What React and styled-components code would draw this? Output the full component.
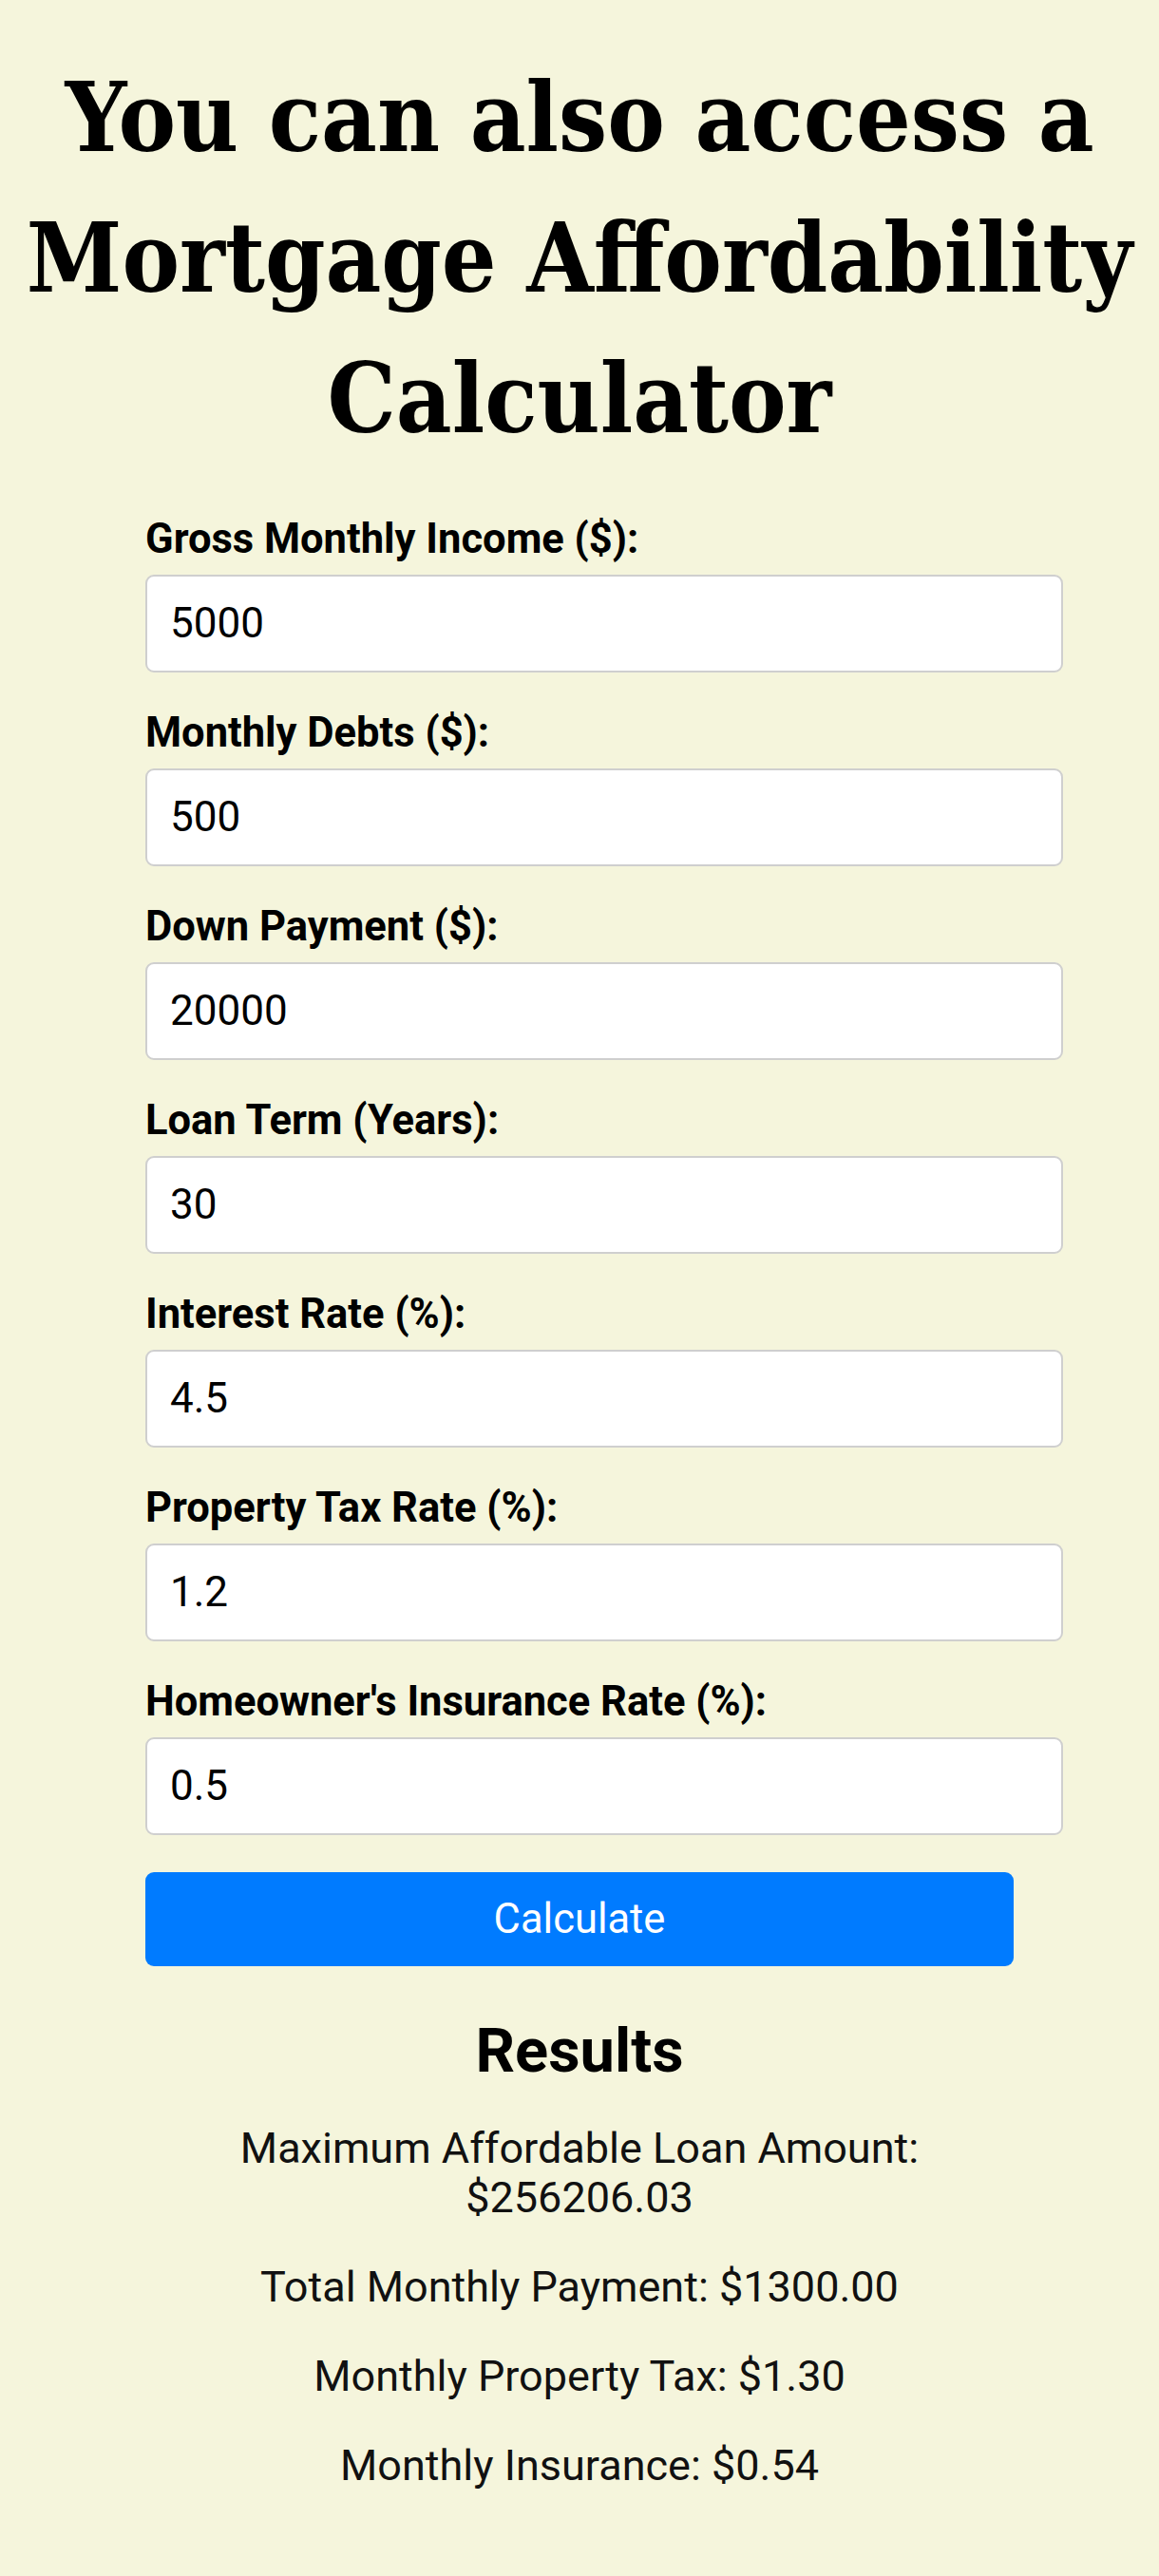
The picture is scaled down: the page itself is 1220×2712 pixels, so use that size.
import React from "react";
import styled, { createGlobalStyle } from "styled-components";

const GlobalStyle = createGlobalStyle`
  html, body {
    margin: 0;
    padding: 0;
    background: #f5f5dc;
  }
  body {
    font-family: Roboto, "Liberation Sans", Arial, sans-serif;
    color: #000;
  }
`;

const Page = styled.div`
  min-height: 2712px;
  padding: 50px 8px 0;
  box-sizing: border-box;
`;

const Title = styled.h1`
  margin: 0 0 49px;
  text-align: center;
  font-family: "DejaVu Serif Condensed", "DejaVu Serif", serif;
  font-stretch: condensed;
  font-weight: 700;
  font-size: 101px;
  line-height: 148px;
`;

const Form = styled.div`
  width: 914px;
  margin: 0 auto;
`;

const Label = styled.label`
  display: block;
  margin-bottom: 13px;
  font-size: 43.5px;
  line-height: 49px;
  font-weight: 700;
`;

const Input = styled.input`
  display: block;
  width: 100%;
  margin: 0 0 39px;
  padding: 25px 24px;
  border: 2px solid #cfcfcf;
  border-radius: 9px;
  background: #fff;
  font-family: inherit;
  font-size: 44px;
  line-height: 49px;
  color: #000;
  &:focus {
    outline: none;
  }
`;

const Button = styled.button`
  display: block;
  width: 100%;
  padding: 25px 0;
  border: none;
  border-radius: 9px;
  background: #007bff;
  color: #fff;
  font-family: inherit;
  font-size: 43.5px;
  line-height: 49px;
  cursor: pointer;
`;

const Results = styled.section`
  text-align: center;
`;

const ResultsTitle = styled.h2`
  margin: 52px 0 40px;
  font-size: 65px;
  line-height: 74px;
  font-weight: 700;
`;

const ResultLine = styled.p`
  margin: 0 0 42px;
  font-size: 45px;
  line-height: 52px;
  color: #111;
`;

const fields = [
  ["Gross Monthly Income ($):", "5000"],
  ["Monthly Debts ($):", "500"],
  ["Down Payment ($):", "20000"],
  ["Loan Term (Years):", "30"],
  ["Interest Rate (%):", "4.5"],
  ["Property Tax Rate (%):", "1.2"],
  ["Homeowner's Insurance Rate (%):", "0.5"],
];

const results = [
  "Maximum Affordable Loan Amount: $256206.03",
  "Total Monthly Payment: $1300.00",
  "Monthly Property Tax: $1.30",
  "Monthly Insurance: $0.54",
];

const App = () => (
  <Page>
    <GlobalStyle />
    <Title>You can also access a Mortgage Affordability Calculator</Title>
    <Form>
      {fields.map(([label, value], i) => (
        <div key={label}>
          <Label htmlFor={`field-${i}`}>{label}</Label>
          <Input id={`field-${i}`} type="text" defaultValue={value} />
        </div>
      ))}
      <Button type="button">Calculate</Button>
      <Results>
        <ResultsTitle>Results</ResultsTitle>
        {results.map((line) => (
          <ResultLine key={line}>{line}</ResultLine>
        ))}
      </Results>
    </Form>
  </Page>
);

export default App;
